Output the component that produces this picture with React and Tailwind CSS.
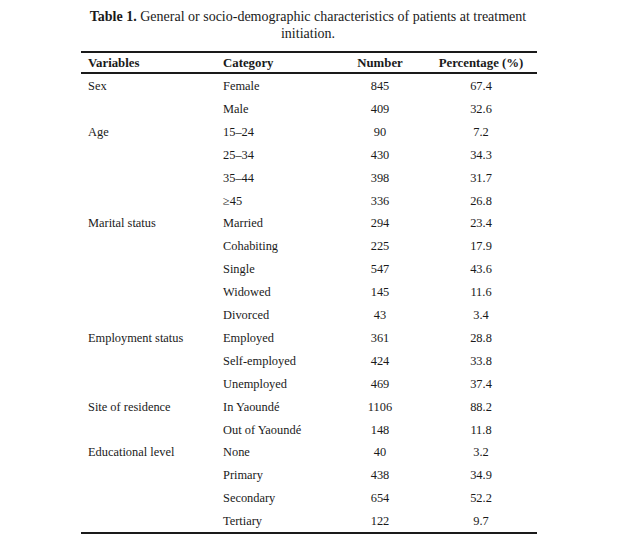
import React from "react";

const rows = [
  ["Sex", "Female", "845", "67.4"],
  ["", "Male", "409", "32.6"],
  ["Age", "15–24", "90", "7.2"],
  ["", "25–34", "430", "34.3"],
  ["", "35–44", "398", "31.7"],
  ["", "≥45", "336", "26.8"],
  ["Marital status", "Married", "294", "23.4"],
  ["", "Cohabiting", "225", "17.9"],
  ["", "Single", "547", "43.6"],
  ["", "Widowed", "145", "11.6"],
  ["", "Divorced", "43", "3.4"],
  ["Employment status", "Employed", "361", "28.8"],
  ["", "Self-employed", "424", "33.8"],
  ["", "Unemployed", "469", "37.4"],
  ["Site of residence", "In Yaoundé", "1106", "88.2"],
  ["", "Out of Yaoundé", "148", "11.8"],
  ["Educational level", "None", "40", "3.2"],
  ["", "Primary", "438", "34.9"],
  ["", "Secondary", "654", "52.2"],
  ["", "Tertiary", "122", "9.7"],
];

export default function App() {
  return (
    <div
      className="w-[644px] h-[540px] bg-white text-[#1a1a1a]"
      style={{ fontFamily: '"Liberation Serif", "Times New Roman", serif' }}
    >
      <div className="pt-[8px] ml-[80px] w-[456px] text-center text-[14px] leading-[17px]">
        <span className="font-bold">Table 1.</span> General or socio-demographic characteristics of patients at treatment initiation.
      </div>
      <div className="ml-[81px] w-[456px] mt-[9px] border-t-2 border-b-2 border-[#1a1a1a] text-[12.4px]">
        <div className="flex items-center h-[21px] pt-[2px] border-b-2 border-[#1a1a1a] font-bold text-[12.8px]">
          <div className="w-[142px] pl-[7px]">Variables</div>
          <div className="w-[132px]">Category</div>
          <div className="w-[50px] text-center">Number</div>
          <div className="flex-1 text-center pl-[20px]">Percentage (%)</div>
        </div>
        <div className="flex flex-col">
          {rows.map((r, i) => (
            <div key={i} className="flex items-center h-[22.9px] pt-[2px]">
              <div className="w-[142px] pl-[7px]">{r[0]}</div>
              <div className="w-[132px]">{r[1]}</div>
              <div className="w-[50px] text-center">{r[2]}</div>
              <div className="flex-1 text-center pl-[20px]">{r[3]}</div>
            </div>
          ))}
        </div>
      </div>
    </div>
  );
}
